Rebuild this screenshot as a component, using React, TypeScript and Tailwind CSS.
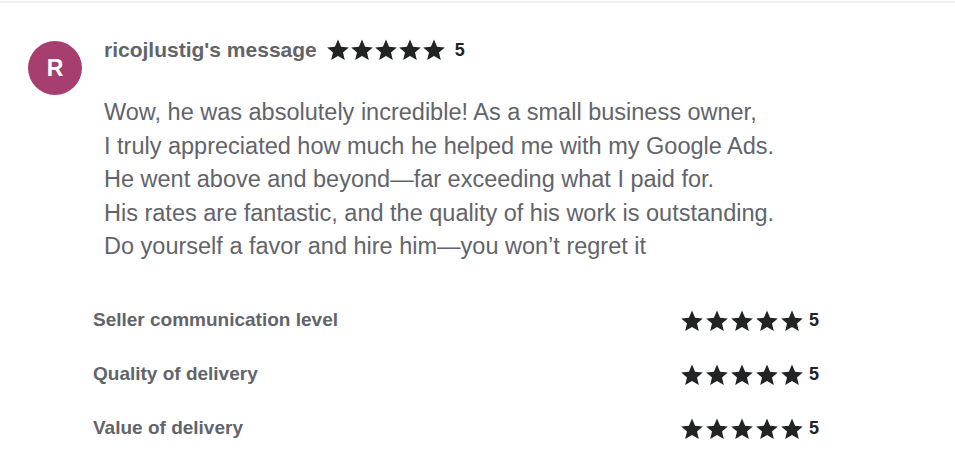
const FONT = { fontFamily: '"Liberation Sans", Arial, sans-serif' };

function Star({ size }: { size: number }) {
	return (
		<svg width={size} height={size} viewBox="0 0 24 24" fill="#222325">
			<path d="M12 1.6l3.1 7.1 7.7.7-5.8 5.1 1.8 7.6L12 18.1l-6.8 4 1.8-7.6-5.8-5.1 7.7-.7z" />
		</svg>
	);
}

function Stars({ size, gap }: { size: number; gap: string }) {
	return (
		<div className={`flex items-center ${gap}`}>
			{[0, 1, 2, 3, 4].map((i) => (
				<Star key={i} size={size} />
			))}
		</div>
	);
}

const lines = [
	"Wow, he was absolutely incredible! As a small business owner,",
	"I truly appreciated how much he helped me with my Google Ads.",
	"He went above and beyond—far exceeding what I paid for.",
	"His rates are fantastic, and the quality of his work is outstanding.",
	"Do yourself a favor and hire him—you won’t regret it",
];

const ratings = ["Seller communication level", "Quality of delivery", "Value of delivery"];

export default function App() {
	return (
		<div className="w-[955px] h-[470px] bg-white overflow-hidden" style={FONT}>
			<div className="h-[2px] bg-[#efefef] mt-[1px]"></div>
			<div className="flex gap-[22px] pl-[28px] pt-[33px]">
				<div className="w-[54px] h-[54px] mt-[5px] rounded-full bg-[#a63f70] flex items-center justify-center text-white text-[23px] font-bold shrink-0">
					R
				</div>
				<div className="flex flex-col">
					<div className="flex items-center gap-[9px] h-[28px]">
						<span className="text-[21px] font-bold text-[#62646a]">ricojlustig's message</span>
						<Stars size={24} gap="gap-0" />
						<span className="text-[18px] font-bold text-[#222325]">5</span>
					</div>
					<div className="mt-[32px] text-[23.5px] leading-[33.5px] text-[#62646a]">
						{lines.map((l) => (
							<div key={l}>{l}</div>
						))}
					</div>
				</div>
			</div>
			<div className="flex flex-col pl-[93px] pr-[136px] mt-[44px] gap-[28px]">
				{ratings.map((r) => (
					<div key={r} className="flex items-center justify-between h-[26px]">
						<span className="text-[19px] font-bold text-[#62646a]">{r}</span>
						<div className="flex items-center gap-[5px]">
							<Stars size={24} gap="gap-[1px]" />
							<span className="text-[18px] font-bold text-[#222325]">5</span>
						</div>
					</div>
				))}
			</div>
		</div>
	);
}
